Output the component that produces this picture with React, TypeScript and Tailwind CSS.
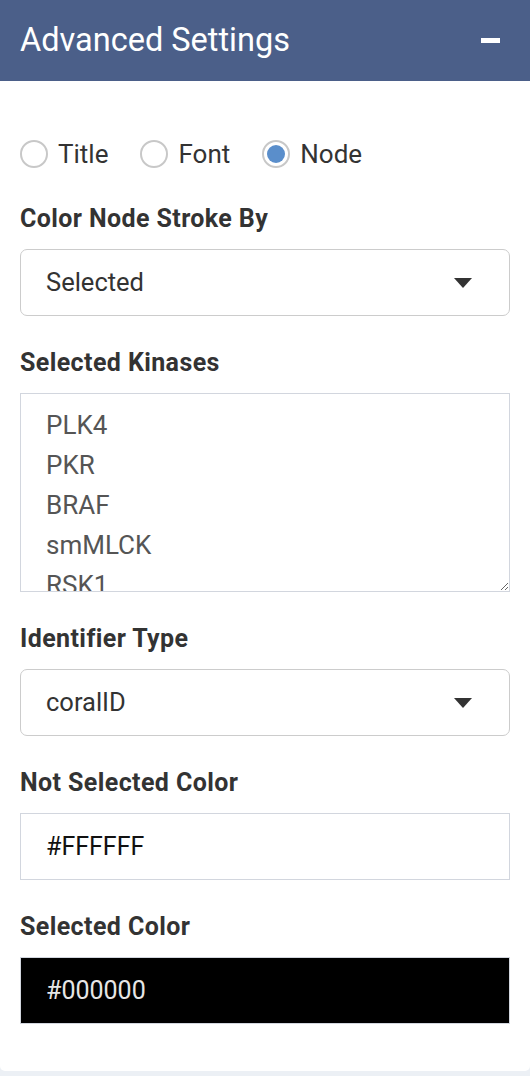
import { useState } from "react";

const font = { fontFamily: "Roboto, 'Liberation Sans', sans-serif" };

function Radio({ label, checked, onClick }: { label: string; checked?: boolean; onClick: () => void }) {
  return (
    <button onClick={onClick} className="flex items-center gap-[10px] text-[26px] text-[#333] leading-[30px]">
      <span className="w-[28px] h-[28px] rounded-full border-2 border-[#c8c8c8] bg-white flex items-center justify-center">
        {checked && <span className="w-[18px] h-[18px] rounded-full bg-[#5a8ecb]" />}
      </span>
      {label}
    </button>
  );
}

function Field({ label, children }: { label: string; children: React.ReactNode }) {
  return (
    <div className="flex flex-col">
      <label className="text-[25px] leading-[30px] font-bold tracking-[0.4px] text-[#333] mb-[15px]">{label}</label>
      {children}
    </div>
  );
}

function Select({ value }: { value: string }) {
  return (
    <div className="h-[67px] rounded-[7px] border border-[#cccccc] bg-white flex items-center justify-between pl-[25px] pr-[37px]">
      <span className="text-[25.5px] text-[#333]">{value}</span>
      <svg width="18" height="10" viewBox="0 0 18 10">
        <path d="M0 0 L18 0 L9 10 Z" fill="#333" />
      </svg>
    </div>
  );
}

export default function App() {
  const [tab, setTab] = useState("Node");

  return (
    <div className="min-h-screen bg-[#ecf0f5]" style={font}>
      <div className="bg-white rounded-b-[5px] pb-[47px]">
        <header className="h-[81px] bg-[#4b5f89] flex items-center justify-between pl-5 pr-[30px]">
          <h3 className="text-[32.5px] text-white">Advanced Settings</h3>
          <span className="w-[19px] h-[5px] bg-white" />
        </header>

        <div className="px-5 pt-[58px] flex flex-col gap-[32px]">
          <div className="flex items-center gap-[32px] h-[30px] mb-[3px]">
            {["Title", "Font", "Node"].map((t) => (
              <Radio key={t} label={t} checked={tab === t} onClick={() => setTab(t)} />
            ))}
          </div>

          <Field label="Color Node Stroke By">
            <Select value="Selected" />
          </Field>

          <Field label="Selected Kinases">
            <textarea
              readOnly
              value={"PLK4\nPKR\nBRAF\nsmMLCK\nRSK1\nCDK2"}
              className="h-[199px] border border-[#d2d6de] bg-white pl-[25px] pt-[11px] text-[26px] leading-[40px] text-[#555] overflow-hidden resize-y outline-none"
            />
          </Field>

          <Field label="Identifier Type">
            <Select value="coralID" />
          </Field>

          <Field label="Not Selected Color">
            <input
              readOnly
              value="#FFFFFF"
              className="h-[67px] border border-[#d2d6de] bg-white pl-[25px] text-[25px] text-[#111] outline-none"
            />
          </Field>

          <Field label="Selected Color">
            <input
              readOnly
              value="#000000"
              className="h-[67px] border border-[#d2d6de] bg-black pl-[25px] text-[25px] text-[#e6e6e6] outline-none"
            />
          </Field>
        </div>
      </div>
    </div>
  );
}
